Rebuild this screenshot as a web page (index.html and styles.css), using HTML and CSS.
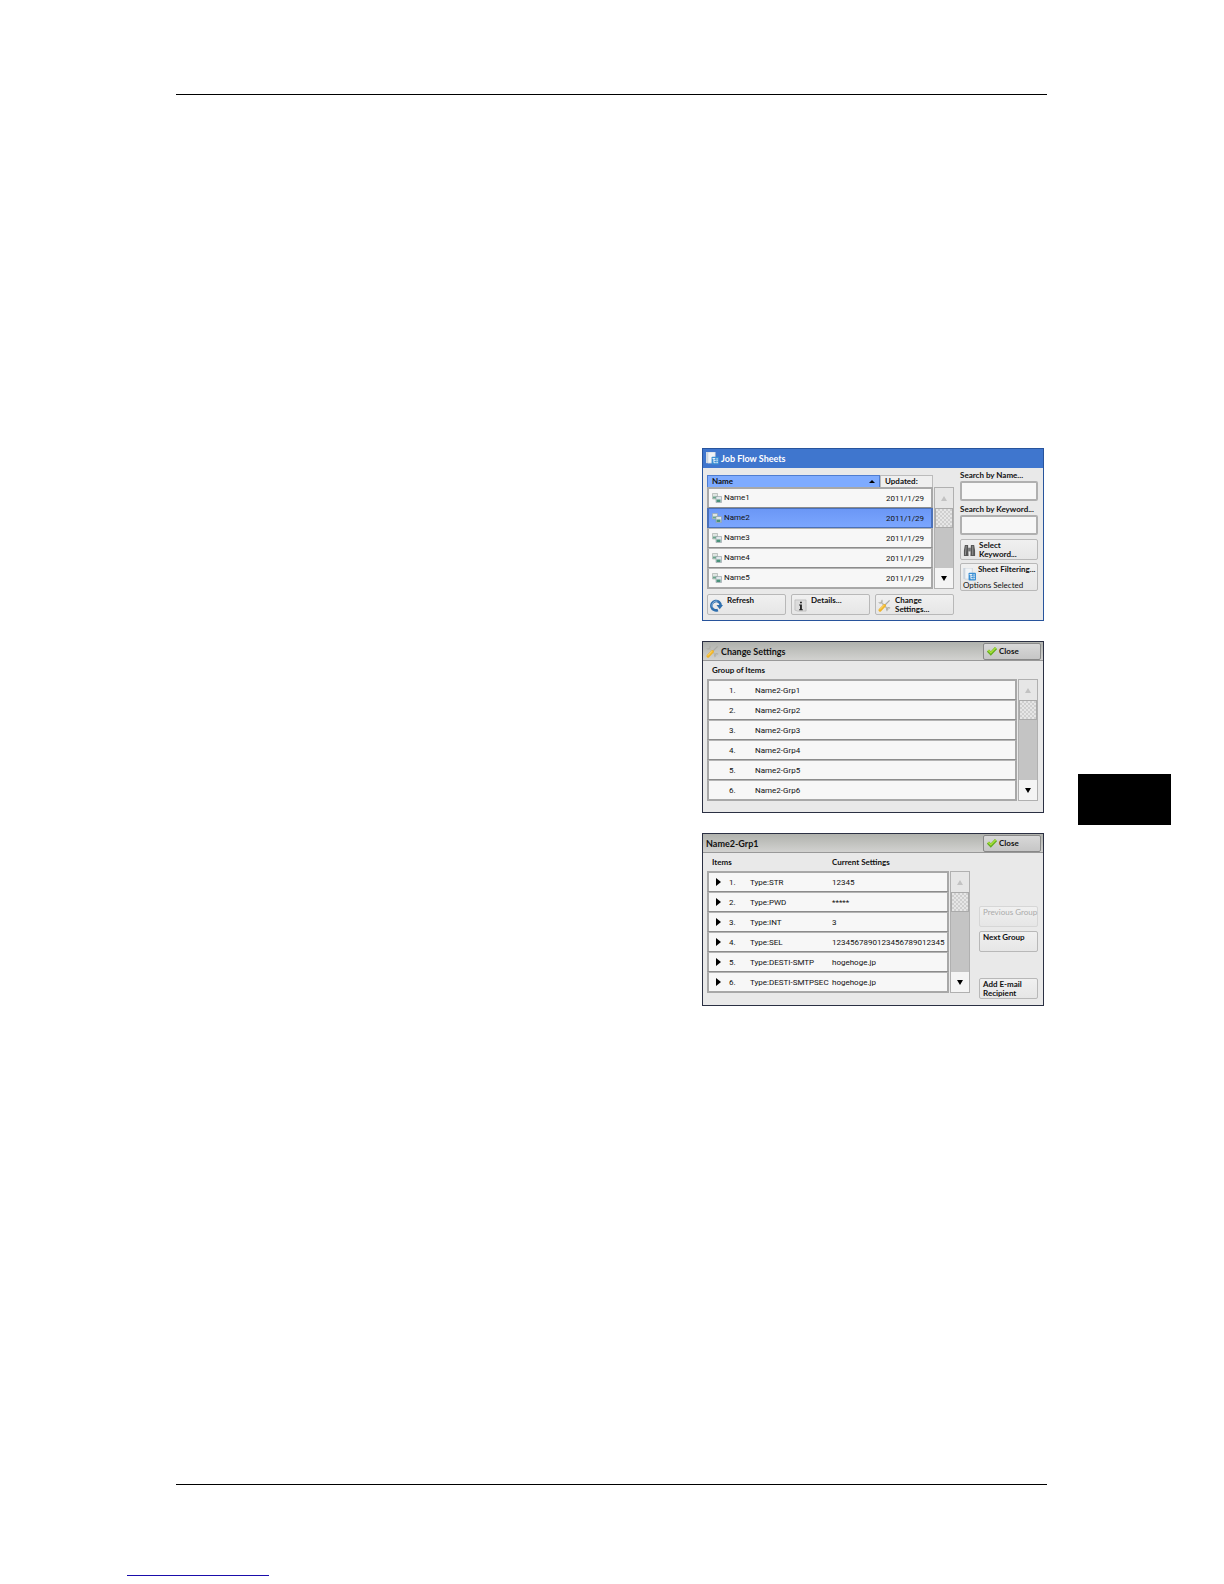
FILE: index.html
```html
<!DOCTYPE html>
<html lang="en">
<head>
    <meta charset="UTF-8">
    <meta name="viewport" content="width=device-width, initial-scale=1.0">
    <title>Job Flow Sheets</title>
    <link rel="stylesheet" href="styles.css">
</head>
<body>
    <svg class="symbols" aria-hidden="true">
        <symbol id="icon-sheet" viewBox="0 0 14 14">
            <path d="M0 0h3v12H0z" fill="#d3dbe3"/>
            <path d="M2 0h8v12H2z" fill="#f1f4f7" stroke="#b9c4d0" stroke-width=".6"/>
            <rect x="6" y="5" width="8" height="8.500" rx="1" fill="#3b8fd4"/>
            <path d="M7 7h3M8.500 7v4.500M8.500 9h2M8.500 11.500h2M11 7.500h2M11 9.500h2M11 11.500h2" stroke="#fff" stroke-width=".9" fill="none"/>
        </symbol>
        <symbol id="icon-pages" viewBox="0 0 10 10">
            <path d="M.5.5h5v5.500h-5z" fill="#dfe5e2" stroke="#9aa5a0" stroke-width=".6"/>
            <path d="M1 3.500h4v2H1z" fill="#6aa58c"/>
            <path d="M4 3.500h5.500v6H4z" fill="#dfe6ea" stroke="#8b979d" stroke-width=".6"/>
            <path d="M4.500 6.500h4v2.500h-4z" fill="#4b927b"/>
        </symbol>
        <symbol id="icon-refresh" viewBox="0 0 14 14">
            <path d="M8.500 11.800A5 5 0 1 1 11.500 7" fill="none" stroke="#2f6fae" stroke-width="2.800"/>
            <path d="M7 6.500h7l-3.500 4.500z" fill="#2f6fae"/>
            <path d="M2.500 9A5 5 0 0 1 8 2.200" fill="none" stroke="#8fb9e0" stroke-width="1"/>
        </symbol>
        <symbol id="icon-info" viewBox="0 0 14 14">
            <path d="M1 1h12v12H4l-3-1z" fill="#dcdcdc" stroke="#b4b4b4" stroke-width=".7"/>
            <path d="M6.500 3H8.500v1.500H6.500zM5.500 6h3v5h1v1H5.500v-1h1V7h-1z" fill="#222"/>
        </symbol>
        <symbol id="icon-tools" viewBox="0 0 14 14">
            <path d="M3 3l8 8.500" stroke="#b9b9b2" stroke-width="1.600"/>
            <path d="M.8 3.500A2 2 0 0 0 4 1M10 13a2 2 0 0 1 3-3" fill="none" stroke="#b0b0a8" stroke-width="1.300"/>
            <path d="M12.500 1.500L7.500 6.500" stroke="#aaaaa5" stroke-width="1.300"/>
            <path d="M7 7L2.200 12" stroke="#f0b429" stroke-width="3.200" stroke-linecap="round"/>
            <path d="M6.500 6.700L2 11.400" stroke="#ffe07a" stroke-width="1"/>
        </symbol>
        <symbol id="icon-binoculars" viewBox="0 0 14 14">
            <path d="M2 1h3.500v3L6 13H1V7zM8.500 1H12l1 6v6H8z" fill="#555"/>
            <path d="M5.500 4h3v4h-3z" fill="#777"/>
            <path d="M3.500 2L2.500 12M10.500 2v10" stroke="#aaa" stroke-width=".8"/>
        </symbol>
        <symbol id="icon-check" viewBox="0 0 10 10">
            <path d="M1 4.500L3.800 7.500 9 2" fill="none" stroke="#63ad1e" stroke-width="3"/>
            <path d="M1.200 4.200L3.800 6.800 8.800 1.800" fill="none" stroke="#a8e03a" stroke-width="1.500"/>
        </symbol>
    </svg>

    <div class="page">
        <header class="rule"></header>

        <main class="screens">
            <section class="screen screen-blue">
                <div class="title-bar">
                    <svg class="icon"><use href="#icon-sheet"/></svg>
                    <h2>Job Flow Sheets</h2>
                </div>
                <div class="sheets-body">
                    <div class="sheets-main">
                        <div class="list-box">
                            <table class="list sheets">
                                <thead>
                                    <tr><th class="sorted"><span>Name</span></th><th>Updated:</th></tr>
                                </thead>
                                <tbody>
                                    <tr><td><svg class="icon-small"><use href="#icon-pages"/></svg>Name1</td><td>2011/1/29</td></tr>
                                    <tr class="selected"><td><svg class="icon-small"><use href="#icon-pages"/></svg>Name2</td><td>2011/1/29</td></tr>
                                    <tr><td><svg class="icon-small"><use href="#icon-pages"/></svg>Name3</td><td>2011/1/29</td></tr>
                                    <tr><td><svg class="icon-small"><use href="#icon-pages"/></svg>Name4</td><td>2011/1/29</td></tr>
                                    <tr><td><svg class="icon-small"><use href="#icon-pages"/></svg>Name5</td><td>2011/1/29</td></tr>
                                </tbody>
                            </table>
                            <div class="scroll scroll-sheets">
                                <button class="up" aria-label="Scroll up" disabled></button>
                                <div class="thumb"></div>
                                <div class="track"></div>
                                <button class="down" aria-label="Scroll down"></button>
                            </div>
                        </div>
                        <div class="actions">
                            <button class="btn"><svg class="icon"><use href="#icon-refresh"/></svg><span>Refresh</span></button>
                            <button class="btn"><svg class="icon"><use href="#icon-info"/></svg><span>Details...</span></button>
                            <button class="btn"><svg class="icon"><use href="#icon-tools"/></svg><span>Change<br>Settings...</span></button>
                        </div>
                    </div>
                    <div class="search">
                        <label for="searchName">Search by Name...</label>
                        <input type="text" id="searchName">
                        <label for="searchKeyword">Search by Keyword...</label>
                        <input type="text" id="searchKeyword">
                        <button class="btn"><svg class="icon"><use href="#icon-binoculars"/></svg><span>Select<br>Keyword...</span></button>
                        <button class="btn filter"><svg class="icon"><use href="#icon-sheet"/></svg><span>Sheet Filtering...</span><span class="note">Options Selected</span></button>
                    </div>
                </div>
            </section>

            <section class="screen">
                <div class="title-bar">
                    <svg class="icon"><use href="#icon-tools"/></svg>
                    <h2>Change Settings</h2>
                    <button class="btn close"><svg class="icon-small"><use href="#icon-check"/></svg><span>Close</span></button>
                </div>
                <div class="settings-body">
                    <h3>Group of Items</h3>
                    <div class="list-box">
                        <table class="list groups">
                            <tbody>
                                <tr><td>1.</td><td>Name2-Grp1</td></tr>
                                <tr><td>2.</td><td>Name2-Grp2</td></tr>
                                <tr><td>3.</td><td>Name2-Grp3</td></tr>
                                <tr><td>4.</td><td>Name2-Grp4</td></tr>
                                <tr><td>5.</td><td>Name2-Grp5</td></tr>
                                <tr><td>6.</td><td>Name2-Grp6</td></tr>
                            </tbody>
                        </table>
                        <div class="scroll">
                            <button class="up" aria-label="Scroll up" disabled></button>
                            <div class="thumb"></div>
                            <div class="track"></div>
                            <button class="down" aria-label="Scroll down"></button>
                        </div>
                    </div>
                </div>
            </section>

            <section class="screen">
                <div class="title-bar">
                    <h2>Name2-Grp1</h2>
                    <button class="btn close"><svg class="icon-small"><use href="#icon-check"/></svg><span>Close</span></button>
                </div>
                <div class="group-body">
                    <div class="list-box">
                        <table class="list items">
                            <colgroup>
                                <col class="col-marker">
                                <col class="col-number">
                                <col class="col-type">
                                <col>
                            </colgroup>
                            <thead>
                                <tr><th colspan="3">Items</th><th>Current Settings</th></tr>
                            </thead>
                            <tbody>
                                <tr><td class="marker"></td><td>1.</td><td>Type:STR</td><td>12345</td></tr>
                                <tr><td class="marker"></td><td>2.</td><td>Type:PWD</td><td>*****</td></tr>
                                <tr><td class="marker"></td><td>3.</td><td>Type:INT</td><td>3</td></tr>
                                <tr><td class="marker"></td><td>4.</td><td>Type:SEL</td><td>1234567890123456789012345</td></tr>
                                <tr><td class="marker"></td><td>5.</td><td>Type:DESTI-SMTP</td><td>hogehoge.jp</td></tr>
                                <tr><td class="marker"></td><td>6.</td><td>Type:DESTI-SMTPSEC</td><td>hogehoge.jp</td></tr>
                            </tbody>
                        </table>
                        <div class="scroll scroll-items">
                            <button class="up" aria-label="Scroll up" disabled></button>
                            <div class="thumb"></div>
                            <div class="track"></div>
                            <button class="down" aria-label="Scroll down"></button>
                        </div>
                    </div>
                    <div class="group-nav">
                        <button class="btn" disabled><span>Previous Group</span></button>
                        <button class="btn"><span>Next Group</span></button>
                        <button class="btn add"><span>Add E-mail<br>Recipient</span></button>
                    </div>
                </div>
            </section>
        </main>

        <aside class="chapter-tab"></aside>
        <footer class="rule"></footer>
        <a class="page-link" href="#" aria-label="Home"></a>
    </div>
</body>
</html>
```
FILE: styles.css
```css
* {
    box-sizing: border-box;
}
body {
    font-family: Lato, "Noto Sans", sans-serif;
    font-size: 8px;
    line-height: 9px;
    color: #111;
    background: #fff;
    margin: 0;
}
h2, h3 {
    margin: 0;
}
button, input {
    font: inherit;
    color: inherit;
}
.symbols {
    display: none;
}
.page {
    display: grid;
    grid-template-columns: 49px 1fr 31px 93px;
    grid-template-rows: auto 1fr auto auto;
    min-height: 100vh;
    padding: 94px 53px 8px 127px;
}
.rule {
    grid-column: 2;
    height: 1px;
    background: #000;
}
.screens {
    grid-column: 2;
    grid-row: 2;
    justify-self: end;
    display: flex;
    flex-direction: column;
    gap: 20px;
    width: 342px;
    max-width: 100%;
    margin: 353px 3px 0 0;
}
.chapter-tab {
    grid-column: 4;
    grid-row: 2;
    height: 51px;
    margin-top: 679px;
    background: #000;
}
.page-link {
    grid-column: 1 / -1;
    width: 142px;
    height: 91px;
    border-bottom: 1px solid #1a0dab;
}

/* screens */
.screen {
    border: 1px solid #2b3043;
    background: #e9e9e9;
}
.screen-blue {
    border-color: #28549c;
}
.title-bar {
    display: flex;
    align-items: center;
    gap: 2px;
    height: 19px;
    padding: 0 2px 0 3px;
    background: linear-gradient(#b0b2ad, #d2d2d0);
    border-bottom: 1px solid #999;
}
.screen-blue .title-bar {
    background: #3f76ce;
    border-bottom-color: #3f76ce;
    color: #fff;
}
.title-bar h2 {
    flex: 1;
    font-size: 9px;
    font-weight: 700;
}
.icon {
    flex: none;
    width: 13px;
    height: 13px;
}
.icon-small {
    flex: none;
    width: 10px;
    height: 10px;
}

/* buttons */
.btn {
    display: flex;
    align-items: flex-start;
    gap: 4px;
    height: 21px;
    padding: 1px 3px;
    border: 1px solid #b8b8b8;
    border-radius: 2px;
    background: linear-gradient(#f0f0f0, #e6e6e6);
    font-size: 8px;
    font-weight: 700;
    text-align: left;
    cursor: pointer;
}
.btn .icon {
    margin-top: 3px;
}
.btn:disabled {
    border-color: #d6d6d6;
    color: #aaa;
    font-weight: 400;
    cursor: default;
}
.close {
    align-items: center;
    gap: 2px;
    width: 58px;
    height: 17px;
    border-color: #888;
    background: linear-gradient(#d8d8d8, #c6c6c6);
}

/* lists */
.list-box {
    display: flex;
    gap: 1px;
}
.list {
    flex: 1;
    table-layout: fixed;
    border-collapse: separate;
    border-spacing: 0;
}
.list th {
    padding: 0;
    text-align: left;
}
.list td {
    height: 20px;
    padding: 0;
    border-top: 1px solid #b4b4b4;
    border-bottom: 1px solid #8c8c8c;
    background: #f7f7f7;
    font-family: Roboto, "Noto Sans", sans-serif;
    white-space: nowrap;
}
.list tbody tr:first-child td {
    height: 21px;
    border-top: 2px solid #a8a8a8;
}
.list tbody tr:last-child td {
    height: 21px;
    border-bottom: 2px solid #a8a8a8;
}
.list td:first-child {
    border-left: 2px solid #a8a8a8;
}
.list td:last-child {
    border-right: 2px solid #a8a8a8;
}
.scroll {
    display: flex;
    flex-direction: column;
    width: 20px;
    border: 1px solid #b0b0b0;
    background: #c4c4c4;
}
.up, .down {
    display: flex;
    align-items: center;
    justify-content: center;
    height: 20px;
    padding: 0;
    border: 0;
    background: #f4f4f4;
}
.up {
    background: #e6e6e6;
}
.up::before, .down::before {
    content: "";
    border: 3px solid transparent;
    border-top: 0;
    border-bottom: 5px solid #c2c2c2;
}
.down::before {
    border-top: 5px solid #000;
    border-bottom: 0;
}
.thumb {
    height: 20px;
    border: 1px solid #aaa;
    background: repeating-conic-gradient(#cfcfcf 0 25%, #e6e6e6 0 50%) 0 0 / 4px 4px;
}
.track {
    flex: 1;
}

/* job flow sheets */
.sheets-body {
    display: grid;
    grid-template-columns: 1fr 78px;
    gap: 6px;
    padding: 7px 5px 5px 4px;
}
.sheets th {
    height: 12px;
    padding-left: 4px;
    border: 1px solid #bbb;
    border-bottom: 0;
    background: #efefef;
    font-size: 8px;
}
.sheets th:last-child {
    width: 53px;
}
.sheets .sorted {
    border-color: #4f7dd0;
    background: #7eabff;
}
.sorted span {
    display: flex;
    align-items: center;
    justify-content: space-between;
    padding-right: 4px;
}
.sorted span::after {
    content: "";
    border: 3px solid transparent;
    border-top: 0;
    border-bottom: 3px solid #000;
}
.sheets td:first-child {
    padding-left: 3px;
}
.sheets td:last-child {
    padding-left: 6px;
}
.sheets .icon-small {
    margin-right: 2px;
    vertical-align: middle;
}
.list .selected td {
    border-color: #4a70b8;
    background: linear-gradient(#6b97f6, #7ba6ff);
}
.scroll-sheets {
    margin-top: 12px;
}
.actions {
    display: grid;
    grid-template-columns: repeat(3, 1fr);
    gap: 5px;
    margin-top: 5px;
}
.actions .btn {
    padding: 1px 2px;
}
.search {
    display: flex;
    flex-direction: column;
    margin-top: -4px;
}
.search label {
    height: 10px;
    font-weight: 700;
    white-space: nowrap;
}
.search input {
    width: 100%;
    height: 20px;
    margin-bottom: 4px;
    border: 2px solid #b0b0b0;
    border-radius: 2px;
    background: #f7f7f7;
}
.search .btn {
    gap: 3px;
    margin-bottom: 3px;
    padding: 1px 2px;
}
.search .filter {
    display: grid;
    grid-template-columns: 13px 1fr;
    gap: 0 2px;
    height: 28px;
    white-space: nowrap;
}
.filter .note {
    grid-column: 1 / -1;
    font-weight: 400;
}

/* change settings */
.settings-body {
    padding: 0 5px 11px 4px;
}
.settings-body h3 {
    padding: 5px 0 4px 5px;
    font-size: 8px;
    font-weight: 700;
}
.groups td:first-child {
    width: 48px;
    padding-left: 20px;
}

/* group items */
.group-body {
    display: grid;
    grid-template-columns: 1fr 59px;
    gap: 9px;
    padding: 0 5px 12px 4px;
}
.items {
    width: 100%;
}
.items th {
    height: 18px;
    font-size: 8px;
}
.items th:first-child {
    padding-left: 5px;
}
.col-marker {
    width: 22px;
}
.col-number {
    width: 21px;
}
.col-type {
    width: 82px;
}
.items .marker::before {
    content: "";
    display: block;
    width: 0;
    margin-left: 7px;
    border: 4px solid transparent;
    border-right: 0;
    border-left: 5px solid #000;
}
.scroll-items {
    flex: none;
    margin-top: 18px;
}
.group-nav {
    display: flex;
    flex-direction: column;
    gap: 4px;
    padding-top: 53px;
    white-space: nowrap;
}
.group-nav .add {
    margin-top: auto;
    margin-bottom: -6px;
}
```
